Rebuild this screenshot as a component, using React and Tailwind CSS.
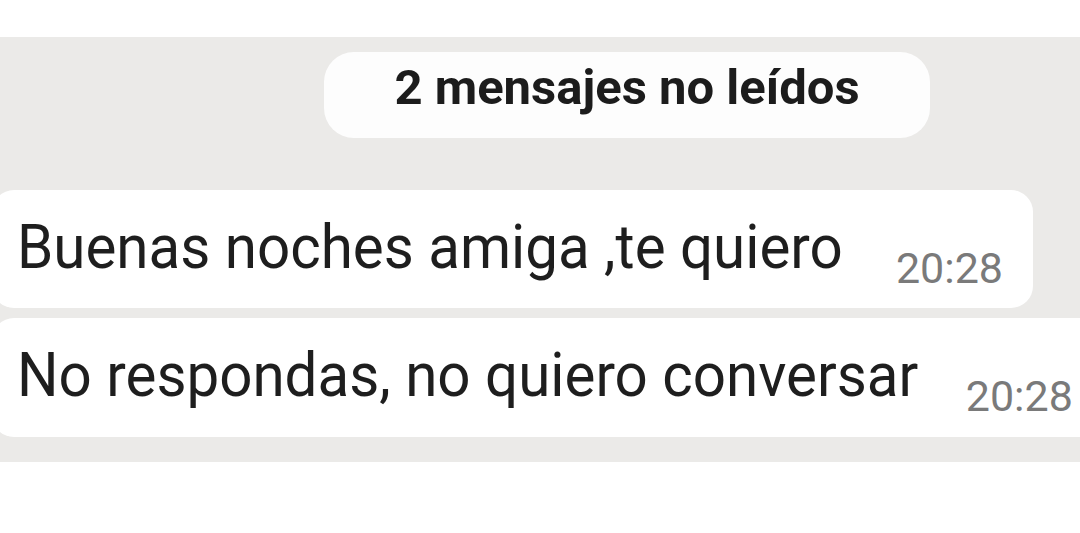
export default function App() {
  return (
    <div className="w-[1080px] h-[533px] bg-white overflow-hidden font-['Roboto',sans-serif]">
      <div className="h-[37px] bg-white" />
      <div className="h-[425px] bg-[#ebeae8] pt-[15px] flex flex-col">
        <div className="ml-[324px] w-[606px] h-[86px] rounded-[30px] bg-[#fdfdfd] flex items-center justify-center">
          <span className="mt-[-16px] text-[49px] leading-none font-bold text-[#1c1c1c]">2 mensajes no leídos</span>
        </div>
        <div className="mt-[52px] ml-[-8px] w-[1041px] h-[118px] rounded-[22px] bg-white flex items-start pl-[25px]">
          <span className="pt-[26px] text-[62px] leading-none text-[#1e1e1e] whitespace-nowrap origin-left scale-x-[0.94]">Buenas noches amiga ,te quiero</span>
          <span className="ml-auto mr-[30px] pt-[57px] text-[43px] leading-none text-[#7a7a7a]">20:28</span>
        </div>
        <div className="mt-[10px] ml-[-8px] w-[1120px] h-[119px] rounded-[22px] bg-white flex items-start pl-[25px]">
          <span className="pt-[26px] text-[62px] leading-none text-[#1e1e1e] whitespace-nowrap origin-left scale-x-[0.94]">No respondas, no quiero conversar</span>
          <span className="ml-[-10px] pt-[57px] text-[43px] leading-none text-[#7a7a7a] whitespace-nowrap">20:28</span>
        </div>
      </div>
    </div>
  );
}
